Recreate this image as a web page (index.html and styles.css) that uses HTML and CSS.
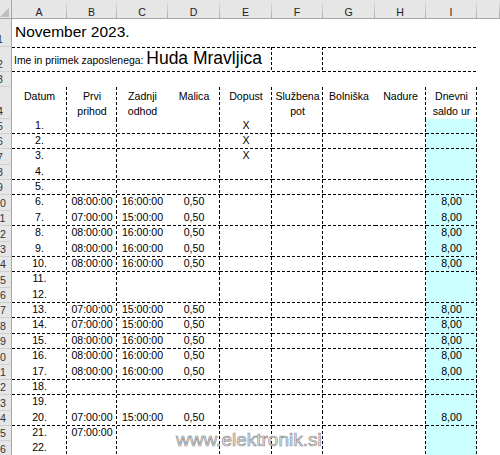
FILE: index.html
```html
<!DOCTYPE html>
<html>
<head>
<meta charset="utf-8">
<link rel="stylesheet" href="styles.css">
</head>
<body>
<div class="sheet">
  <div class="colhead">
    <div class="corner"><svg width="11" height="18" viewBox="0 0 11 18"><polygon points="0,17 9,8 9,17" fill="#bdbdbd"/></svg></div>
    <div class="ch">A</div><div class="ch">B</div><div class="ch">C</div><div class="ch">D</div><div class="ch">E</div><div class="ch">F</div><div class="ch">G</div><div class="ch">H</div><div class="ch">I</div><div class="ch"></div>
  </div>

  <div class="row r1"><div class="rh"><span>1</span></div><div class="title">November 2023.</div></div>
  <div class="row r2"><div class="rh"><span>2</span></div><div class="name"><span class="lbl">Ime in priimek zaposlenega: </span>Huda Mravljica</div><div class="nf"></div><div class="ng"></div></div>
  <div class="row r3"><div class="rh"><span>3</span></div></div>
  <div class="row r4"><div class="rh"><span>4</span></div><div class="hd">Datum</div><div class="hd">Prvi<br>prihod</div><div class="hd">Zadnji<br>odhod</div><div class="hd">Malica</div><div class="hd">Dopust</div><div class="hd">Službena<br>pot</div><div class="hd">Bolniška</div><div class="hd">Nadure</div><div class="hd">Dnevni<br>saldo ur</div></div>

  <div class="row b bb"><div class="rh"><span>5</span></div><div class="c">1.</div><div class="c"></div><div class="c"></div><div class="c"></div><div class="c">X</div><div class="c"></div><div class="c"></div><div class="c"></div><div class="c"></div></div>
  <div class="row b bb"><div class="rh"><span>6</span></div><div class="c">2.</div><div class="c"></div><div class="c"></div><div class="c"></div><div class="c">X</div><div class="c"></div><div class="c"></div><div class="c"></div><div class="c"></div></div>
  <div class="row b"><div class="rh"><span>7</span></div><div class="c">3.</div><div class="c"></div><div class="c"></div><div class="c"></div><div class="c">X</div><div class="c"></div><div class="c"></div><div class="c"></div><div class="c"></div></div>
  <div class="row b bb"><div class="rh"><span>8</span></div><div class="c">4.</div><div class="c"></div><div class="c"></div><div class="c"></div><div class="c"></div><div class="c"></div><div class="c"></div><div class="c"></div><div class="c"></div></div>
  <div class="row b bb"><div class="rh"><span>9</span></div><div class="c">5.</div><div class="c"></div><div class="c"></div><div class="c"></div><div class="c"></div><div class="c"></div><div class="c"></div><div class="c"></div><div class="c"></div></div>
  <div class="row b"><div class="rh"><span>10</span></div><div class="c">6.</div><div class="c">08:00:00</div><div class="c">16:00:00</div><div class="c">0,50</div><div class="c"></div><div class="c"></div><div class="c"></div><div class="c"></div><div class="c">8,00</div></div>
  <div class="row b bb"><div class="rh"><span>11</span></div><div class="c">7.</div><div class="c">07:00:00</div><div class="c">15:00:00</div><div class="c">0,50</div><div class="c"></div><div class="c"></div><div class="c"></div><div class="c"></div><div class="c">8,00</div></div>
  <div class="row b"><div class="rh"><span>12</span></div><div class="c">8.</div><div class="c">08:00:00</div><div class="c">16:00:00</div><div class="c">0,50</div><div class="c"></div><div class="c"></div><div class="c"></div><div class="c"></div><div class="c">8,00</div></div>
  <div class="row b bb"><div class="rh"><span>13</span></div><div class="c">9.</div><div class="c">08:00:00</div><div class="c">16:00:00</div><div class="c">0,50</div><div class="c"></div><div class="c"></div><div class="c"></div><div class="c"></div><div class="c">8,00</div></div>
  <div class="row b bb"><div class="rh"><span>14</span></div><div class="c">10.</div><div class="c">08:00:00</div><div class="c">16:00:00</div><div class="c">0,50</div><div class="c"></div><div class="c"></div><div class="c"></div><div class="c"></div><div class="c">8,00</div></div>
  <div class="row b"><div class="rh"><span>15</span></div><div class="c">11.</div><div class="c"></div><div class="c"></div><div class="c"></div><div class="c"></div><div class="c"></div><div class="c"></div><div class="c"></div><div class="c"></div></div>
  <div class="row b bb"><div class="rh"><span>16</span></div><div class="c">12.</div><div class="c"></div><div class="c"></div><div class="c"></div><div class="c"></div><div class="c"></div><div class="c"></div><div class="c"></div><div class="c"></div></div>
  <div class="row b bb"><div class="rh"><span>17</span></div><div class="c">13.</div><div class="c">07:00:00</div><div class="c">15:00:00</div><div class="c">0,50</div><div class="c"></div><div class="c"></div><div class="c"></div><div class="c"></div><div class="c">8,00</div></div>
  <div class="row b bb"><div class="rh"><span>18</span></div><div class="c">14.</div><div class="c">07:00:00</div><div class="c">15:00:00</div><div class="c">0,50</div><div class="c"></div><div class="c"></div><div class="c"></div><div class="c"></div><div class="c">8,00</div></div>
  <div class="row b bb"><div class="rh"><span>19</span></div><div class="c">15.</div><div class="c">08:00:00</div><div class="c">16:00:00</div><div class="c">0,50</div><div class="c"></div><div class="c"></div><div class="c"></div><div class="c"></div><div class="c">8,00</div></div>
  <div class="row b"><div class="rh"><span>20</span></div><div class="c">16.</div><div class="c">08:00:00</div><div class="c">16:00:00</div><div class="c">0,50</div><div class="c"></div><div class="c"></div><div class="c"></div><div class="c"></div><div class="c">8,00</div></div>
  <div class="row b bb"><div class="rh"><span>21</span></div><div class="c">17.</div><div class="c">08:00:00</div><div class="c">16:00:00</div><div class="c">0,50</div><div class="c"></div><div class="c"></div><div class="c"></div><div class="c"></div><div class="c">8,00</div></div>
  <div class="row b bb"><div class="rh"><span>22</span></div><div class="c">18.</div><div class="c"></div><div class="c"></div><div class="c"></div><div class="c"></div><div class="c"></div><div class="c"></div><div class="c"></div><div class="c"></div></div>
  <div class="row b"><div class="rh"><span>23</span></div><div class="c">19.</div><div class="c"></div><div class="c"></div><div class="c"></div><div class="c"></div><div class="c"></div><div class="c"></div><div class="c"></div><div class="c"></div></div>
  <div class="row b bb"><div class="rh"><span>24</span></div><div class="c">20.</div><div class="c">07:00:00</div><div class="c">15:00:00</div><div class="c">0,50</div><div class="c"></div><div class="c"></div><div class="c"></div><div class="c"></div><div class="c">8,00</div></div>
  <div class="row b"><div class="rh"><span>25</span></div><div class="c">21.</div><div class="c">07:00:00</div><div class="c"></div><div class="c"></div><div class="c"></div><div class="c"></div><div class="c"></div><div class="c"></div><div class="c"></div></div>
  <div class="row b"><div class="rh"><span>26</span></div><div class="c">22.</div><div class="c"></div><div class="c"></div><div class="c"></div><div class="c"></div><div class="c"></div><div class="c"></div><div class="c"></div><div class="c"></div></div>

  <div class="wm">www.elektronik.si</div>
</div>
</body>
</html>
```

FILE: styles.css
```css
* { box-sizing: border-box; }
html, body { margin: 0; padding: 0; background: #fff; }
body { font-family: "Liberation Sans", Arial, sans-serif; font-size: 10.6px; color: #000; }

.sheet {
  position: relative; width: 500px; height: 455px; overflow: hidden;
  --dv: linear-gradient(to bottom, #000 3px, transparent 3px);
  --dh: linear-gradient(to right, #000 3px, transparent 3px);
}

.colhead, .row {
  display: grid;
  grid-template-columns: 12px 55px 50px 51px 52px 52px 51px 52px 51px 51px 1fr;
}

/* column header bar */
.colhead { height: 19px; background: #e6e6e6; border-bottom: 1px solid #a5a5a5; }
.corner { border-right: 1px solid #a5a5a5; }
.corner svg { display: block; }
.ch {
  text-align: center; font-size: 10.6px; line-height: 14px; padding-top: 5px; color: #222;
  border-right: 1px solid #b0b0b0;
  border-image: linear-gradient(to bottom, #e6e6e6, #a8a8a8) 0 1 0 0;
}

/* row headers */
.rh {
  background: #e6e6e6; border-right: 1px solid #a5a5a5; border-bottom: 1px solid #d0d0d0;
  display: flex; align-items: flex-end; justify-content: flex-end; overflow: hidden;
  color: #333; font-size: 10.6px;
}
.rh span { flex: none; width: 24px; text-align: center; line-height: 13px; margin-right: -1px; }

/* row heights */
.r1 { height: 28px; }
.r2 { height: 25px; }
.r3 { height: 15px; }
.r4 { height: 31.6px; }
.b { height: 15.38px; }

.title { grid-column: 2 / -1; font-size: 15.5px; line-height: 20px; padding: 2.6px 0 0 3px; white-space: nowrap; }

/* dashed cell edges drawn as repeating tiles: right, bottom, top */
.name, .nf, .ng, .hd, .c {
  --r: none; --bt: none; --tp: none;
  background-image: var(--r), var(--bt), var(--tp);
  background-size: 1px 5px, 5px 1px, 5px 1px;
  background-position: right top, left bottom, left top;
  background-repeat: repeat-y, repeat-x, repeat-x;
}
.name, .nf, .ng { --bt: var(--dh); --tp: var(--dh); }
.name { grid-column: 2 / 7; --r: var(--dv); font-size: 17.5px; line-height: 22px; padding-left: 2px; white-space: nowrap; }
.lbl { font-size: 10.4px; }
.nf { --r: var(--dv); }
.ng { grid-column: 8 / 11; }

.hd { text-align: center; line-height: 15px; padding-top: 1.8px; }

.c { text-align: center; line-height: 13px; white-space: nowrap; }
.b > .c:nth-child(10) { background-color: #ccffff; }

.r4 > :nth-child(2), .r4 > :nth-child(3), .r4 > :nth-child(5), .r4 > :nth-child(6),
.r4 > :nth-child(7), .r4 > :nth-child(9), .r4 > :nth-child(10),
.b > :nth-child(2), .b > :nth-child(3), .b > :nth-child(5), .b > :nth-child(6),
.b > :nth-child(7), .b > :nth-child(9), .b > :nth-child(10) { --r: var(--dv); }

.bb > .c { --bt: var(--dh); }

.wm {
  position: absolute; left: 176px; top: 430px;
  font-size: 19px; line-height: 20px; color: #f4f4f4;
  -webkit-text-stroke: 0.7px #8a8a8a; white-space: nowrap;
}
```
